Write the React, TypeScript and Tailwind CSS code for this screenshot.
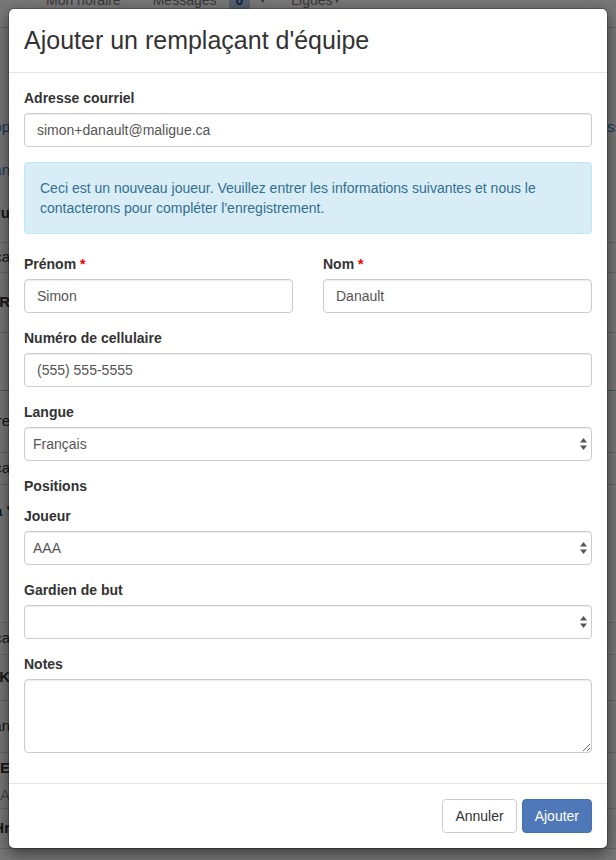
import React from "react";

// Page that sits behind the modal backdrop (only the edges show)
const bgRows = [
  { h: 72, left: "", right: "", cls: "" },
  { h: 55, left: "Supp", right: "ssion", cls: "text-[#337ab7]" },
  { h: 30, left: "Plan", right: "", cls: "text-[#337ab7]" },
  { h: 58, left: "Salu", right: "", cls: "font-bold", border: true },
  { h: 30, left: "Remplaça", right: "", cls: "", border: true },
  { h: 60, left: "R", right: "", cls: "font-bold", border: true },
  { h: 58, left: "", right: "", cls: "", border: true, green: true },
  { h: 62, left: "Heure", right: "", cls: "", border: true },
  { h: 32, left: "Remplaça", right: "", cls: "", border: true },
  { h: 52, left: "La '", right: "", cls: "font-bold" },
  { h: 86, left: "", right: "", cls: "", border: true },
  { h: 32, left: "Remplaça", right: "", cls: "", border: true },
  { h: 46, left: "K", right: "", cls: "font-bold", border: true },
  { h: 52, left: "Plan", right: "", cls: "", border: true },
  { h: 30, left: "E", right: "", cls: "font-bold" },
  { h: 26, left: "A", right: "", cls: "text-[#999]", border: true },
  { h: 40, left: "Hr", right: "", cls: "font-bold", border: true },
];

function SelectArrows() {
  return (
    <svg
      width="7"
      height="12"
      viewBox="0 0 7 12"
      className="pointer-events-none absolute right-[5px] top-1/2 -translate-y-1/2"
    >
      <path d="M3.5 0 L7 4.6 H0 Z" fill="#555" />
      <path d="M3.5 12 L7 7.4 H0 Z" fill="#555" />
    </svg>
  );
}

function Select({ value, options }: { value: string; options: string[] }) {
  return (
    <div className="relative">
      <select
        defaultValue={value}
        className="h-[34px] w-full appearance-none rounded border border-[#ccc] bg-white pl-2 pr-6 text-[14px] text-[#555] shadow-[inset_0_1px_1px_rgba(0,0,0,0.075)] outline-none"
      >
        {options.map((o) => (
          <option key={o} value={o}>
            {o}
          </option>
        ))}
      </select>
      <SelectArrows />
    </div>
  );
}

const inputCls =
  "block h-[34px] w-full rounded border border-[#ccc] bg-white px-3 py-[6px] text-[14px] text-[#555] shadow-[inset_0_1px_1px_rgba(0,0,0,0.075)] outline-none";

const labelCls = "mb-[5px] block font-bold leading-5 text-[#333]";

export default function App() {
  return (
    <div className="relative h-[860px] w-[616px] overflow-hidden bg-white font-['Liberation_Sans',Arial,sans-serif] text-[14px] text-[#333]">
      {/* background page */}
      <div className="flex h-[28px] items-start border-b border-[#ddd] pl-[46px] text-[14px] text-[#777]">
        <span className="-mt-[10px] leading-5">Mon horaire</span>
        <span className="-mt-[10px] ml-[32px] flex items-center leading-5">
          Messages
          <span className="ml-[12px] rounded bg-[#b7cbe6] px-[7px] font-bold text-[#23508f]">0</span>
          <span className="ml-[8px] text-[9px]">▼</span>
        </span>
        <span className="-mt-[10px] ml-[24px] flex items-center leading-5">
          Ligues<span className="text-[9px]">▼</span>
        </span>
      </div>
      <div className="pointer-events-none">
        {bgRows.map((r, i) => (
          <div
            key={i}
            className={`flex items-center justify-between ${r.border ? (r.green ? "border-b border-[#9c9]" : "border-b border-[#ddd]") : ""}`}
            style={{ height: r.h }}
          >
            <div className={`flex w-[10px] justify-end overflow-hidden whitespace-nowrap text-[15px] ${r.cls}`}>
              {r.left}
            </div>
            <div className={`w-[9px] overflow-hidden whitespace-nowrap text-[15px] ${r.cls}`}>{r.right}</div>
          </div>
        ))}
      </div>

      {/* backdrop */}
      <div className="absolute inset-0 bg-black/[0.53]" />

      {/* modal */}
      <div className="absolute inset-0 px-2 pt-2">
        <div className="rounded-md border border-black/20 bg-white bg-clip-padding shadow-[0_5px_15px_rgba(0,0,0,0.5)]">
          <div className="border-b border-[#e5e5e5] p-[15px]">
            <h4 className="text-[25px] leading-[33px] text-[#333]">Ajouter un remplaçant d'équipe</h4>
          </div>

          <div className="p-[15px]">
            <div className="mb-[15px]">
              <label className={labelCls}>Adresse courriel</label>
              <input className={inputCls} defaultValue="simon+danault@maligue.ca" />
            </div>

            <div className="mb-5 rounded border border-[#bce8f1] bg-[#d9edf7] p-[15px] leading-5 text-[#31708f]">
              Ceci est un nouveau joueur. Veuillez entrer les informations suivantes et nous le contacterons pour
              compléter l'enregistrement.
            </div>

            <div className="mb-[15px] grid grid-cols-2 gap-[30px]">
              <div>
                <label className={labelCls}>
                  Prénom <span className="text-[#e00]">*</span>
                </label>
                <input className={inputCls} defaultValue="Simon" />
              </div>
              <div>
                <label className={labelCls}>
                  Nom <span className="text-[#e00]">*</span>
                </label>
                <input className={inputCls} defaultValue="Danault" />
              </div>
            </div>

            <div className="mb-[15px]">
              <label className={labelCls}>Numéro de cellulaire</label>
              <input className={inputCls} defaultValue="(555) 555-5555" />
            </div>

            <div className="mb-[15px]">
              <label className={labelCls}>Langue</label>
              <Select value="Français" options={["Français", "English"]} />
            </div>

            <div className="mb-[10px] font-bold leading-5">Positions</div>

            <div className="mb-[15px]">
              <label className={labelCls}>Joueur</label>
              <Select value="AAA" options={["", "AAA", "AA", "A", "B", "C"]} />
            </div>

            <div className="mb-[15px]">
              <label className={labelCls}>Gardien de but</label>
              <Select value="" options={["", "AAA", "AA", "A", "B", "C"]} />
            </div>

            <div className="mb-[15px]">
              <label className={labelCls}>Notes</label>
              <textarea
                rows={3}
                className="block h-[74px] w-full resize-y rounded border border-[#ccc] bg-white px-3 py-[6px] text-[14px] text-[#555] shadow-[inset_0_1px_1px_rgba(0,0,0,0.075)] outline-none"
              />
            </div>
          </div>

          <div className="flex justify-end gap-[5px] border-t border-[#e5e5e5] p-[15px]">
            <button className="h-[34px] rounded border border-[#ccc] bg-white px-3 text-[14px] text-[#333]">
              Annuler
            </button>
            <button className="h-[34px] rounded border border-[#4670b0] bg-[#4f78b9] px-3 text-[14px] text-white">
              Ajouter
            </button>
          </div>
        </div>
      </div>
    </div>
  );
}
